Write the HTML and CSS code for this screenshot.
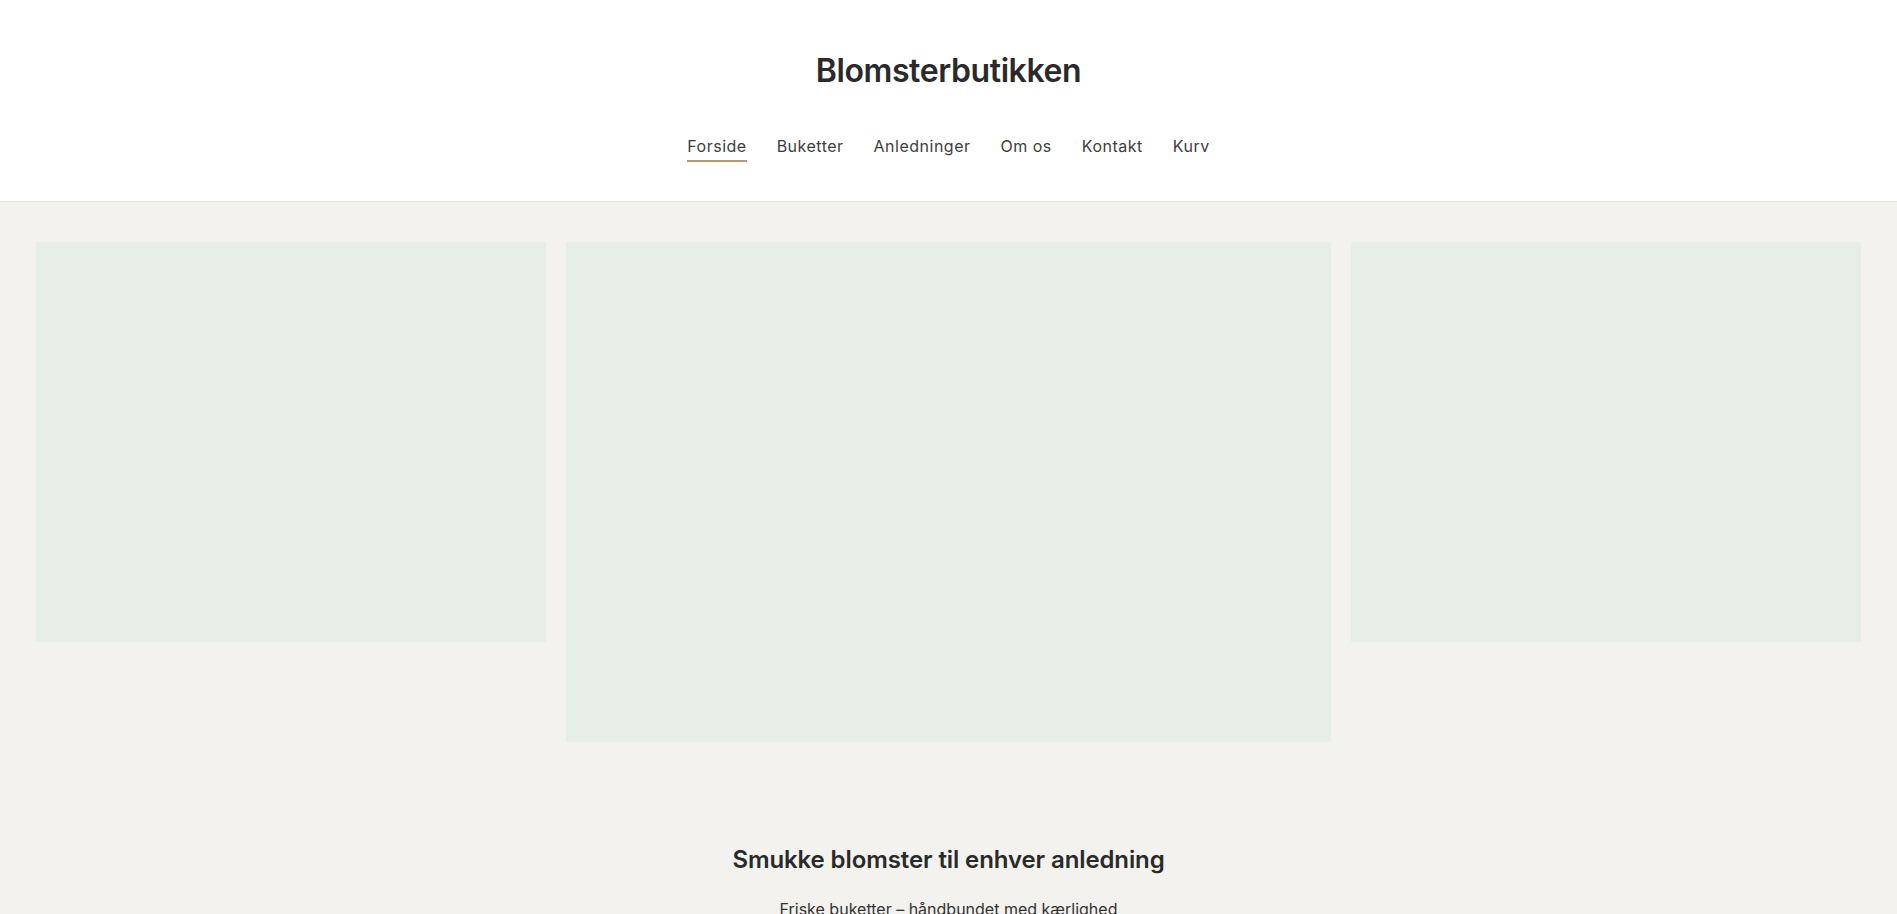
FILE: index.html
```html
<!DOCTYPE html>
<html lang="da">
<head>
<meta charset="utf-8">
<title>Blomsterbutikken</title>
<link rel="stylesheet" href="styles.css">
</head>
<body>
<header class="site-header">
  <h1 class="brand">Blomsterbutikken</h1>
  <nav class="main-nav">
    <a class="nav-link active" href="#">Forside</a>
    <a class="nav-link" href="#">Buketter</a>
    <a class="nav-link" href="#">Anledninger</a>
    <a class="nav-link" href="#">Om os</a>
    <a class="nav-link" href="#">Kontakt</a>
    <a class="nav-link" href="#">Kurv</a>
  </nav>
</header>
<main class="content">
  <section class="gallery">
    <div class="tile tile-side"></div>
    <div class="tile tile-main"></div>
    <div class="tile tile-side"></div>
  </section>
  <section class="intro">
    <h2 class="intro-title">Smukke blomster til enhver anledning</h2>
    <p class="intro-text">Friske buketter – håndbundet med kærlighed</p>
  </section>
</main>
</body>
</html>
```

FILE: styles.css
```css
* { box-sizing: border-box; }
html, body { margin: 0; padding: 0; }
body {
  font-family: Inter, "Noto Sans", sans-serif;
  color: #2a2a2a;
  background: #f3f2ee;
}
.site-header {
  background: #ffffff;
  border-bottom: 1px solid #e4e2de;
  height: 202px;
  display: flex;
  flex-direction: column;
  align-items: center;
  padding-top: 51px;
}
.brand {
  margin: 0;
  font-size: 32px;
  font-weight: 600;
  letter-spacing: -0.4px;
  line-height: 40px;
  color: #2a2a2a;
}
.main-nav {
  display: flex;
  gap: 30px;
  margin-top: 44px;
}
.nav-link {
  font-size: 16px;
  letter-spacing: 0.5px;
  color: #3d3d3d;
  text-decoration: none;
  line-height: 22px;
  padding-bottom: 3px;
  border-bottom: 2px solid transparent;
}
.nav-link.active {
  border-bottom-color: #b59a72;
}
.content {
  padding: 40px 36px 0;
}
.gallery {
  display: grid;
  grid-template-columns: 1fr 1.5fr 1fr;
  gap: 20px;
  align-items: start;
}
.tile {
  background: #e7eee7;
}
.tile-side { height: 400px; }
.tile-main { height: 500px; }
.intro {
  text-align: center;
  padding-top: 102px;
}
.intro-title {
  margin: 0;
  font-size: 24px;
  font-weight: 600;
  letter-spacing: -0.1px;
  line-height: 32px;
}
.intro-text {
  margin: 23px 0 0;
  font-size: 16px;
  color: #333;
}
```
